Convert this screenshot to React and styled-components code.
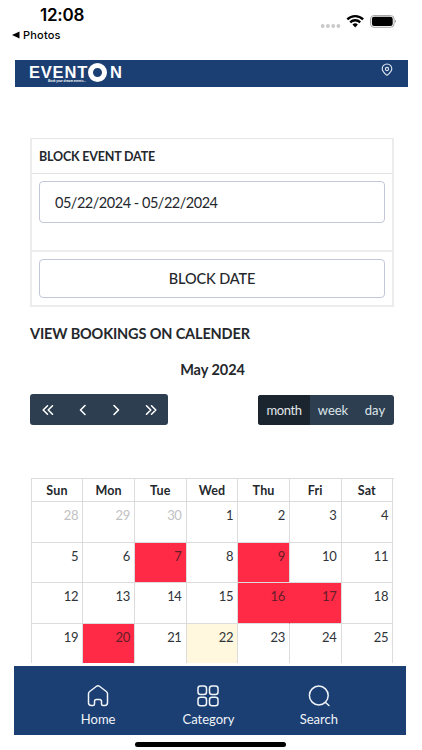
import React from "react";
import styled, { createGlobalStyle } from "styled-components";

const GlobalStyle = createGlobalStyle`
  * {
    box-sizing: border-box;
  }

  body {
    margin: 0;
    background: #ffffff;
    color: #24282c;
    font-family: Lato, "Open Sans", sans-serif;
  }

  button, input {
    font-family: inherit;
    color: inherit;
    margin: 0;
  }
`;

const Screen = styled.div`
  width: 422px;
  height: 750px;
  overflow: hidden;
  display: flex;
  flex-direction: column;
  background: #ffffff;
`;

const StatusBar = styled.div`
  height: 60px;
  flex: none;
  display: flex;
  justify-content: space-between;
  padding: 5px 26px 0 12px;
  font-family: Inter, sans-serif;
  color: #000000;
`;

const Clock = styled.div`
  height: 21px;
  line-height: 21px;
  padding-left: 28px;
  font-size: 17px;
  font-weight: 600;
  letter-spacing: -0.25px;
`;

const BackLink = styled.div`
  display: flex;
  align-items: center;
  gap: 3px;
  height: 17px;
  font-size: 11px;
  font-weight: 500;
  letter-spacing: 0.2px;
`;

const StatusIcons = styled.div`
  padding-top: 8px;

  svg {
    display: block;
  }
`;

const Header = styled.header`
  flex: none;
  display: flex;
  justify-content: space-between;
  height: 27px;
  margin: 0 14px 0 15px;
  padding: 3px 15px 0 14px;
  background: #1b3f73;
  color: #ffffff;
`;

const Logo = styled.div`
  display: flex;
  flex-direction: column;
`;

const LogoName = styled.div`
  display: flex;
  align-items: center;
  height: 18px;
  font-family: "Liberation Sans", sans-serif;
  font-size: 16.5px;
  font-weight: 700;
  line-height: 18px;
  letter-spacing: 0.8px;
`;

const Ring = styled.span`
  width: 19px;
  height: 19px;
  margin: 0 3px 0 0;
  border: 5px solid #ffffff;
  border-radius: 50%;
`;

const Tagline = styled.div`
  height: 4px;
  margin-left: 19px;
  margin-top: -2px;
  font-size: 3.4px;
  font-weight: 700;
  font-style: italic;
  line-height: 4px;
  letter-spacing: 0.05px;
`;

const Content = styled.main`
  height: 576px;
  flex: none;
  padding: 51px 28px 0 30px;
  overflow: hidden;
`;

const Card = styled.section`
  height: 169px;
  border: 2px solid #ebecee;
  border-top: 1px solid #e4e5e7;
`;

const CardTitle = styled.h2`
  height: 35px;
  margin: 0;
  padding-left: 7px;
  border-bottom: 1px solid #e0e1e3;
  font-size: 12.5px;
  font-weight: 700;
  line-height: 36px;
  letter-spacing: -0.18px;
`;

const CardBody = styled.div`
  height: 78px;
  padding: 7px 7px 0;
  border-bottom: 2px solid #ebecee;
`;

const DateInput = styled.input`
  display: block;
  width: 100%;
  height: 42px;
  padding: 0 15px;
  border: 1px solid #c3c7d9;
  border-radius: 4px;
  background: #ffffff;
  font-size: 14.5px;
  letter-spacing: -0.48px;
  outline: none;
`;

const CardFooter = styled.div`
  padding: 7px 7px 0;
`;

const BlockButton = styled.button`
  display: block;
  width: 100%;
  height: 39px;
  padding: 0;
  border: 1px solid #c3c7d9;
  border-radius: 4px;
  background: #ffffff;
  font-size: 14.5px;
  font-weight: 500;
  letter-spacing: -0.1px;
`;

const SectionTitle = styled.h3`
  height: 20px;
  margin: 17px 0 0;
  font-size: 14.5px;
  font-weight: 700;
  line-height: 20px;
  letter-spacing: -0.15px;
`;

const MonthTitle = styled.h4`
  height: 20px;
  margin: 16px 0 14px;
  padding-left: 1px;
  font-size: 14.5px;
  font-weight: 700;
  line-height: 20px;
  letter-spacing: -0.05px;
  text-align: center;
`;

const Toolbar = styled.div`
  display: flex;
  justify-content: space-between;
  align-items: center;
  height: 31px;
`;

const ButtonGroup = styled.div`
  display: flex;
  height: ${(props) => props.$height}px;
  border-radius: 3px;
  background: #2c3e50;
  overflow: hidden;
`;

const ToolButton = styled.button`
  display: flex;
  align-items: center;
  justify-content: center;
  width: ${(props) => props.$width}px;
  padding: 0;
  border: 0;
  background: ${(props) => (props.$active ? "#1a252f" : "transparent")};
  color: ${(props) => (props.$active ? "#e4e8eb" : "#dfe5eb")};
  font-size: 13px;
  line-height: 30px;
  letter-spacing: ${(props) => props.$spacing || 0}px;
`;

const Calendar = styled.div`
  display: grid;
  grid-template-columns: repeat(7, 51.65px);
  grid-template-rows: 23px repeat(4, 40.7px);
  width: 363px;
  margin: 53px 0 0 0.7px;
  border-top: 1px solid #dcdcdc;
  border-left: 1px solid #dcdcdc;
`;

const DayName = styled.div`
  border-right: 1px solid #dcdcdc;
  border-bottom: 1px solid #dcdcdc;
  font-size: 12.5px;
  font-weight: 700;
  line-height: 23px;
  letter-spacing: 0.15px;
  text-align: center;
`;

const dayColors = {
  booked: "#ff2a45",
  today: "#fff8df",
};

const Day = styled.div`
  padding: 3px 4px 0 0;
  border-right: 1px solid ${(props) => (props.$joined ? "#ff2a45" : "#dcdcdc")};
  border-bottom: 1px solid #dcdcdc;
  background: ${(props) => dayColors[props.$kind] || "#ffffff"};
  color: ${(props) => (props.$kind === "booked" ? "#641e2b" : props.$kind === "other" ? "#c0c1c2" : "#303438")};
  font-size: 13px;
  line-height: 20px;
  letter-spacing: -0.3px;
  text-align: right;
`;

const TabBar = styled.nav`
  flex: none;
  display: flex;
  height: 69px;
  margin: 3px 16px 0 14px;
  padding: 0 32px 0 29px;
  background: #1b3f73;
  color: #f1f4f9;
`;

const Tab = styled.div`
  flex: 1;
  display: flex;
  flex-direction: column;
  align-items: center;
  padding-top: 18px;
  font-size: 13px;
  line-height: 18px;

  svg {
    flex: none;
    margin-bottom: 2px;
  }
`;

const HomeIndicator = styled.div`
  flex: none;
  width: 151px;
  height: 5px;
  margin: 7px 0 0 135px;
  border-radius: 3px;
  background: #000000;
`;

const weekdays = ["Sun", "Mon", "Tue", "Wed", "Thu", "Fri", "Sat"];
const days = [28, 29, 30, ...Array.from({ length: 25 }, (_, i) => i + 1)];
const booked = [7, 9, 16, 17, 20];

function dayKind(day, index) {
  if (index < 3) return "other";
  if (booked.includes(day)) return "booked";
  if (day === 22) return "today";
  return "plain";
}

function PhoneStatusIcons() {
  return (
    <svg width="78" height="16" viewBox="0 0 78 16">
      <g fill="#c9c9c9">
        <circle cx="4.7" cy="13" r="1.9" />
        <circle cx="9.9" cy="13" r="1.9" />
        <circle cx="15.2" cy="13" r="1.9" />
        <circle cx="20.4" cy="13" r="1.9" />
      </g>
      <g fill="none" stroke="#000" strokeWidth="2.4">
        <path d="M29.3 6.3a11.3 11.3 0 0 1 15.8 0" />
        <path d="M32.2 9.3a7.2 7.2 0 0 1 10 0" />
      </g>
      <path d="M34.5 11.6a4 4 0 0 1 5.4 0l-2.7 2.8z" fill="#000" />
      <rect x="52.5" y="2.5" width="23.6" height="11.8" rx="3.5" fill="none" stroke="#a5a5a5" />
      <rect x="53.9" y="3.8" width="20.8" height="9.2" rx="2.2" fill="#000" />
      <path d="M77.3 6.7q1.5 1.6 0 3.3z" fill="#777" />
    </svg>
  );
}

function Chevrons({ d, width = 12 }) {
  return (
    <svg width={width} height="12" viewBox={`0 0 ${width} 12`} fill="none" stroke="#fff" strokeWidth="1.6" strokeLinecap="round" strokeLinejoin="round">
      <path d={d} />
    </svg>
  );
}

function TabIcon({ children }) {
  return (
    <svg width="24" height="24" viewBox="0 0 24 24" fill="none" stroke="#f1f4f9" strokeWidth="1.5" strokeLinecap="round" strokeLinejoin="round">
      {children}
    </svg>
  );
}

function App() {
  return (
    <Screen>
      <GlobalStyle />
      <StatusBar>
        <div>
          <Clock>12:08</Clock>
          <BackLink>
            <svg width="8" height="8" viewBox="0 0 8 8">
              <path d="M0 4l7.5-3.4v6.8z" />
            </svg>
            Photos
          </BackLink>
        </div>
        <StatusIcons>
          <PhoneStatusIcons />
        </StatusIcons>
      </StatusBar>
      <Header>
        <Logo>
          <LogoName>
            EVENT
            <Ring />N
          </LogoName>
          <Tagline>Book your dream events...</Tagline>
        </Logo>
        <svg width="12" height="14" viewBox="0 0 12 14" fill="none" stroke="#dfe7f1" strokeWidth="1.1">
          <path d="M6 12.4C3.8 10.7 1.2 8.6 1.2 5.8a4.8 4.8 0 0 1 9.6 0c0 2.8-2.6 4.9-4.8 6.6z" />
          <circle cx="6" cy="6" r="1.6" />
        </svg>
      </Header>
      <Content>
        <Card>
          <CardTitle>BLOCK EVENT DATE</CardTitle>
          <CardBody>
            <DateInput readOnly value="05/22/2024 - 05/22/2024" />
          </CardBody>
          <CardFooter>
            <BlockButton>BLOCK DATE</BlockButton>
          </CardFooter>
        </Card>
        <SectionTitle>VIEW BOOKINGS ON CALENDER</SectionTitle>
        <MonthTitle>May 2024</MonthTitle>
        <Toolbar>
          <ButtonGroup $height={31}>
            <ToolButton $width={36} aria-label="Previous year">
              <Chevrons d="M5.5 1.8L1.2 6l4.3 4.2M10.5 1.8L6.2 6l4.3 4.2" />
            </ToolButton>
            <ToolButton $width={33} aria-label="Previous month">
              <Chevrons d="M8 1.5L3.5 6L8 10.5" />
            </ToolButton>
            <ToolButton $width={34} aria-label="Next month">
              <Chevrons d="M4 1.5L8.5 6L4 10.5" />
            </ToolButton>
            <ToolButton $width={35} aria-label="Next year">
              <Chevrons d="M1.5 1.8L5.8 6l-4.3 4.2M6.5 1.8L10.8 6l-4.3 4.2" />
            </ToolButton>
          </ButtonGroup>
          <ButtonGroup $height={30}>
            <ToolButton $width={52} $spacing={-0.4} $active>
              month
            </ToolButton>
            <ToolButton $width={46}>week</ToolButton>
            <ToolButton $width={38}>day</ToolButton>
          </ButtonGroup>
        </Toolbar>
        <Calendar>
          {weekdays.map((name) => (
            <DayName key={name}>{name}</DayName>
          ))}
          {days.map((day, index) => (
            <Day key={index} $kind={dayKind(day, index)} $joined={day === 16}>
              {day}
            </Day>
          ))}
        </Calendar>
      </Content>
      <TabBar>
        <Tab>
          <TabIcon>
            <path d="M2.5 9.8c0-1 .4-1.7 1.2-2.3l6.5-5c1.1-.8 2.5-.8 3.6 0l6.5 5c.8.6 1.2 1.3 1.2 2.3v9c0 1.6-1 2.7-2.7 2.7H17c-.9 0-1.5-.6-1.5-1.5v-2.5c0-1.2-.8-2-2-2h-3c-1.2 0-2 .8-2 2V20c0 .9-.6 1.5-1.5 1.5H5.2c-1.7 0-2.7-1.1-2.7-2.7z" />
          </TabIcon>
          Home
        </Tab>
        <Tab>
          <TabIcon>
            <rect x="2" y="1.9" width="8.5" height="8.5" rx="2.5" />
            <rect x="13.5" y="1.9" width="8.5" height="8.5" rx="2.5" />
            <rect x="2" y="13.2" width="8.5" height="8.5" rx="2.5" />
            <rect x="13.5" y="13.2" width="8.5" height="8.5" rx="2.5" />
          </TabIcon>
          Category
        </Tab>
        <Tab>
          <TabIcon>
            <circle cx="11.8" cy="11.5" r="9.4" />
            <path d="M18.5 18.5l3.4 3" />
          </TabIcon>
          Search
        </Tab>
      </TabBar>
      <HomeIndicator />
    </Screen>
  );
}

export default App;
